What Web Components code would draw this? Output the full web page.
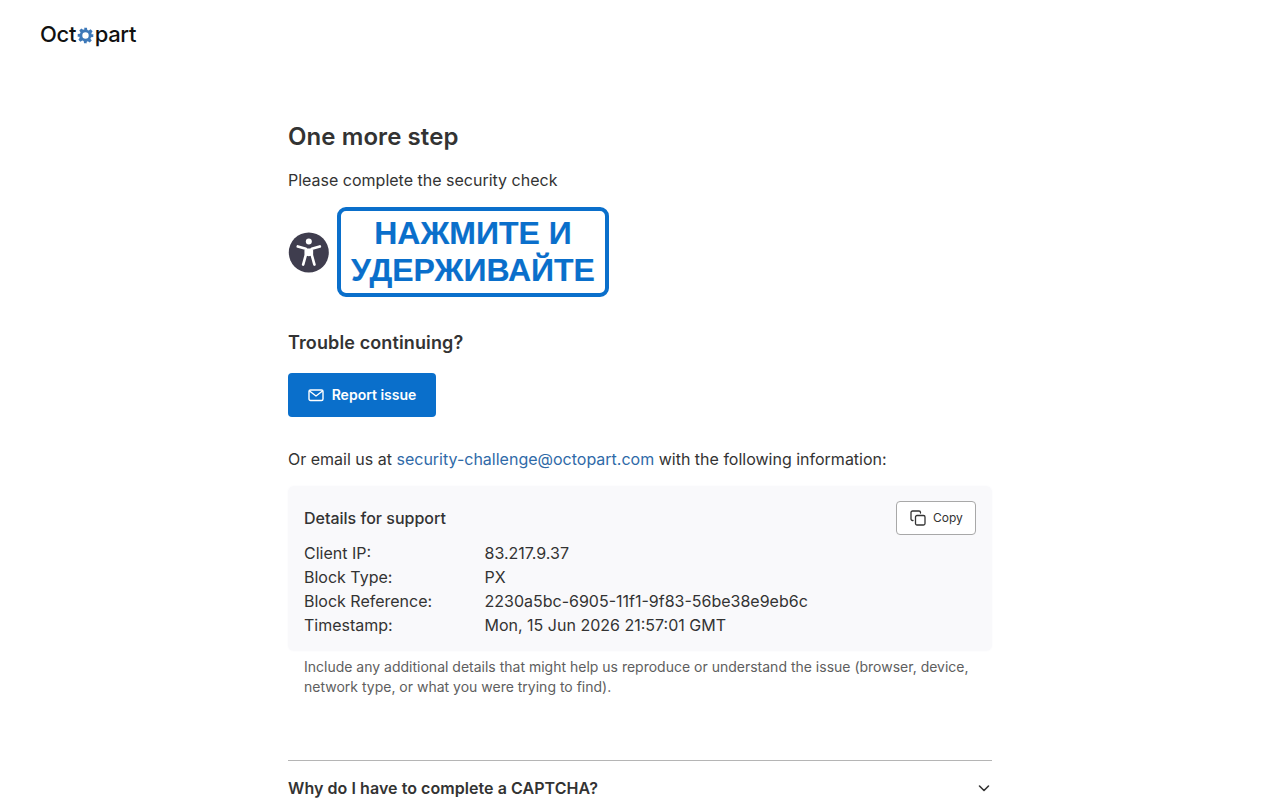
<!DOCTYPE html>
<html lang="en">
<head>
<meta charset="utf-8">
<title>Octopart</title>
<style>
  html, body { margin: 0; padding: 0; background: #fff; }
  body { font-family: 'Inter', sans-serif; color: #333; height: 800px; overflow: hidden; }
</style>
</head>
<body>
<octo-header></octo-header>
<octo-page>
  <h-title slot="title">One more step</h-title>
  <hold-captcha slot="captcha"></hold-captcha>
  <support-card slot="card">
    <detail-row label="Client IP:" value="83.217.9.37"></detail-row>
    <detail-row label="Block Type:" value="PX"></detail-row>
    <detail-row label="Block Reference:" value="2230a5bc-6905-11f1-9f83-56be38e9eb6c"></detail-row>
    <detail-row label="Timestamp:" value="Mon, 15 Jun 2026 21:57:01 GMT"></detail-row>
  </support-card>
  <faq-row slot="faq">Why do I have to complete a CAPTCHA?</faq-row>
</octo-page>

<script>
class OctoHeader extends HTMLElement {
  connectedCallback() {
    this.attachShadow({ mode: 'open' });
    this.shadowRoot.innerHTML = `
      <style>
        :host { display: block; height: 69px; padding-left: 40px; box-sizing: border-box; }
        .logo {
          display: inline-flex;
          align-items: center;
          height: 67px;
          font-family: 'Inter', sans-serif;
          font-weight: 500;
          font-size: 22px;
          letter-spacing: -0.3px;
          color: #111;
        }
        svg { width: 17px; height: 17px; margin: 4px 1px 0 0.5px; }
      </style>
      <span class="logo">Oct<svg viewBox="0 0 24 24"><path fill="#3d78b8" fill-rule="evenodd" d="M10 1h4l.6 3.2 1.9.8 2.7-1.8 2.8 2.8-1.8 2.7.8 1.9L23 10v4l-3.2.6-.8 1.9 1.8 2.7-2.8 2.8-2.7-1.8-1.9.8L14 23h-4l-.6-3.2-1.9-.8-2.7 1.8-2.8-2.8 1.8-2.7-.8-1.9L1 14v-4l3.2-.6.8-1.9-1.8-2.7 2.8-2.8 2.7 1.8 1.9-.8zM12 7.5a4.5 4.5 0 1 0 0 9 4.5 4.5 0 0 0 0-9z"/></svg>part</span>
    `;
  }
}
customElements.define('octo-header', OctoHeader);

class HTitle extends HTMLElement {
  connectedCallback() {
    this.attachShadow({ mode: 'open' });
    this.shadowRoot.innerHTML = `
      <style>
        :host { display: block; font-size: 24px; font-weight: 600; line-height: 32px; letter-spacing: 0.08px; color: #333; }
      </style>
      <slot></slot>
    `;
  }
}
customElements.define('h-title', HTitle);

class HoldCaptcha extends HTMLElement {
  connectedCallback() {
    this.attachShadow({ mode: 'open' });
    this.shadowRoot.innerHTML = `
      <style>
        :host { display: flex; align-items: center; gap: 8px; height: 90px; }
        .a11y { width: 41px; height: 41px; flex: none; }
        .box {
          width: 272px;
          height: 90px;
          box-sizing: border-box;
          border: 4px solid #0a6fcb;
          border-radius: 9px;
          color: #0a6fcb;
          font-family: 'Liberation Sans', sans-serif;
          font-weight: 700;
          font-size: 32px;
          line-height: 36.5px;
          text-align: center;
          padding-top: 4px;
          -webkit-text-stroke: 0.15px #0a6fcb;
        }
      </style>
      <svg class="a11y" viewBox="0 0 41 41">
        <circle cx="20.8" cy="20.5" r="20" fill="#3f3d4e"/>
        <circle cx="20.8" cy="9.5" r="3" fill="#fff"/>
        <path d="M9.8 14.5l8 2.2v6.3l-2.6 9.5M31.8 14.5l-8 2.2v6.3l2.6 9.5" fill="none" stroke="#fff" stroke-width="2.7" stroke-linecap="round" stroke-linejoin="round"/>
        <path d="M17.4 16.5h6.8v7l-3.4.8-3.4-.8z" fill="#fff"/>
      </svg>
      <div class="box">НАЖМИТЕ И<br>УДЕРЖИВАЙТЕ</div>
    `;
  }
}
customElements.define('hold-captcha', HoldCaptcha);

class DetailRow extends HTMLElement {
  connectedCallback() {
    this.attachShadow({ mode: 'open' });
    this.shadowRoot.innerHTML = `
      <style>
        :host { display: grid; grid-template-columns: 180.5px 1fr; font-size: 16px; line-height: 24px; color: #333; }
      </style>
      <span>${this.getAttribute('label')}</span>
      <span>${this.getAttribute('value')}</span>
    `;
  }
}
customElements.define('detail-row', DetailRow);

class SupportCard extends HTMLElement {
  connectedCallback() {
    this.attachShadow({ mode: 'open' });
    this.shadowRoot.innerHTML = `
      <style>
        :host { display: block; }
        .card {
          background: #f9f9fb;
          border-radius: 6px;
          box-shadow: 0 0 3px #f9f9fb;
          padding: 15px 16px 13px;
          height: 165px;
          box-sizing: border-box;
        }
        .top { display: flex; justify-content: space-between; align-items: center; height: 34px; margin-bottom: 6px; }
        .title { font-size: 16px; font-weight: 500; color: #333; }
        button {
          display: flex;
          align-items: center;
          gap: 7px;
          width: 80px;
          height: 34px;
          box-sizing: border-box;
          padding: 0 0 2px 13px;
          background: #fff;
          border: 1px solid #a8a8a8;
          border-radius: 4px;
          font: 400 12px 'Inter', sans-serif;
          color: #333;
        }
        button svg { width: 16px; height: 16px; margin-top: 2px; }
        .note { font-size: 14px; line-height: 20px; color: #5e5e5e; padding: 6px 16px 0; }
      </style>
      <div class="card">
        <div class="top">
          <span class="title">Details for support</span>
          <button>
            <svg viewBox="0 0 16 16" fill="none" stroke="#333" stroke-width="1.3" stroke-linejoin="round" stroke-linecap="round"><rect x="5.5" y="5.5" width="9.5" height="9.5" rx="1.5"/><path d="M3 10.5H2.5A1.5 1.5 0 0 1 1 9V2.5A1.5 1.5 0 0 1 2.5 1H9a1.5 1.5 0 0 1 1.5 1.5V3"/></svg>
            Copy
          </button>
        </div>
        <slot></slot>
      </div>
      <div class="note">Include any additional details that might help us reproduce or understand the issue (browser, device, network type, or what you were trying to find).</div>
    `;
  }
}
customElements.define('support-card', SupportCard);

class FaqRow extends HTMLElement {
  connectedCallback() {
    this.attachShadow({ mode: 'open' });
    this.shadowRoot.innerHTML = `
      <style>
        :host {
          display: flex;
          justify-content: space-between;
          align-items: center;
          border-top: 1px solid #b5b5b5;
          padding: 16px 0;
          font-size: 16px;
          font-weight: 600;
          line-height: 22px;
          letter-spacing: 0.06px;
          color: #333;
        }
        svg { width: 16px; height: 16px; }
      </style>
      <slot></slot>
      <svg viewBox="0 0 16 16" fill="none" stroke="#333" stroke-width="1.6" stroke-linecap="round" stroke-linejoin="round"><path d="M3.5 6l4.5 4.5L12.5 6"/></svg>
    `;
  }
}
customElements.define('faq-row', FaqRow);

class OctoPage extends HTMLElement {
  connectedCallback() {
    this.attachShadow({ mode: 'open' });
    this.shadowRoot.innerHTML = `
      <style>
        :host { display: block; width: 704px; margin: 0 auto; padding-top: 52px; font-size: 16px; line-height: 24px; color: #333; }
        p { margin: 0; }
        .please { margin-top: 15px; }
        .captcha { margin-top: 15px; }
        h2 { margin: 33px 0 0; font-size: 18px; font-weight: 600; line-height: 26px; letter-spacing: 0.12px; }
        .report {
          display: flex;
          align-items: center;
          justify-content: center;
          gap: 8px;
          width: 148px;
          height: 44px;
          margin-top: 17px;
          background: #0a6fcb;
          color: #fff;
          border: 0;
          border-radius: 4px;
          font: 600 14px 'Inter', sans-serif;
          padding: 0 0 1px;
        }
        .report svg { width: 16px; height: 16px; }
        .email { margin-top: 30px; }
        a { color: #2f6aa8; text-decoration: none; }
        .card { display: block; margin-top: 15px; }
        .faq { display: block; margin-top: 63px; }
      </style>
      <slot name="title"></slot>
      <p class="please">Please complete the security check</p>
      <div class="captcha"><slot name="captcha"></slot></div>
      <h2>Trouble continuing?</h2>
      <button class="report">
        <svg viewBox="0 0 16 16" fill="none" stroke="#fff" stroke-width="1.4" stroke-linejoin="round" stroke-linecap="round"><rect x="1" y="3" width="14" height="10.5" rx="1.5"/><path d="M1.5 4l6.5 5 6.5-5"/></svg>
        Report issue
      </button>
      <p class="email">Or email us at <a href="#">security-challenge@octopart.com</a> with the following information:</p>
      <div class="card"><slot name="card"></slot></div>
      <div class="faq"><slot name="faq"></slot></div>
    `;
  }
}
customElements.define('octo-page', OctoPage);
</script>
</body>
</html>
